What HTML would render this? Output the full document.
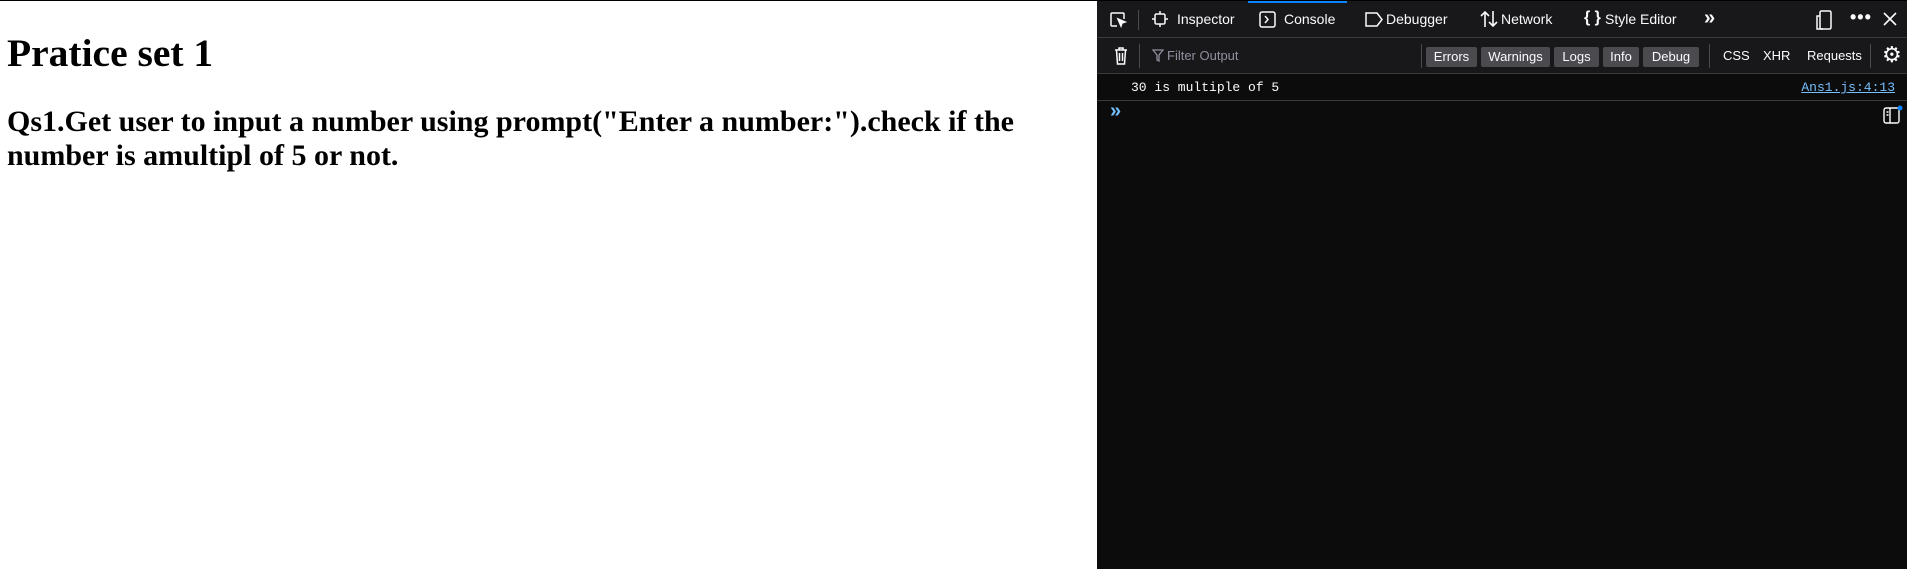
<!DOCTYPE html>
<html><head><style>
*{margin:0;padding:0;box-sizing:border-box}
body{width:1907px;height:568px;overflow:hidden;background:#fff;position:relative;font-family:"Liberation Serif",serif;border-top:1px solid #000}
.page{position:absolute;left:0;top:0;width:1097px;height:568px}
h1{position:absolute;left:7px;top:29px;font-size:39.5px;font-weight:bold;white-space:nowrap}
h2{position:absolute;left:7px;top:104px;font-size:30px;line-height:34px;font-weight:bold;width:1050px}
.dt{position:absolute;left:1097px;top:0;width:810px;height:568px;background:#0c0c0d;font-family:"Liberation Sans",sans-serif;color:#fbfbfe;font-size:14px}
.bar1{position:absolute;left:0;top:0;width:810px;height:37px;background:#18181a;border-bottom:1px solid #3a3a3e}
.bar2{position:absolute;left:0;top:37px;width:810px;height:36px;background:#18181a;border-bottom:1px solid #3a3a3e}
.a{position:absolute;white-space:nowrap}
.t{top:10px;color:#fbfbfe}
.btn{position:absolute;top:9px;height:20px;background:#4a4a4f;color:#fbfbfe;font-size:13px;line-height:20px;text-align:center;border-radius:2px}
.sep{position:absolute;width:1px;background:#4a4a4f}
.msg{position:absolute;left:0;top:73px;width:810px;height:27px;border-bottom:1px solid #3a3a3e;font-family:"Liberation Mono",monospace;font-size:13px}
svg{position:absolute}
</style></head><body>
<div class="page">
<h1>Pratice set 1</h1>
<h2>Qs1.Get user to input a number using prompt("Enter a number:").check if the number is amultipl of 5 or not.</h2>
</div>
<div class="dt">
<div class="bar1">
<div style="position:absolute;left:151px;top:0;width:99px;height:2px;background:#0a84ff"></div>
<svg style="left:12px;top:10px" width="18" height="18" viewBox="0 0 18 18" fill="none" stroke="#fbfbfe" stroke-width="1.5"><path d="M8 15H3a1 1 0 0 1-1-1V3a1 1 0 0 1 1-1h11a1 1 0 0 1 1 1v5"/><path d="M9 8l7 3-3 1-1 3z" fill="#fbfbfe"/></svg>
<div class="sep" style="left:41px;top:9px;height:20px"></div>
<svg style="left:55px;top:10px" width="16" height="16" viewBox="0 0 16 16" fill="none" stroke="#fbfbfe" stroke-width="1.5"><rect x="3" y="3" width="10" height="10" rx="1.5"/><path d="M8 0v3M8 13v3M0 8h3M13 8h3"/></svg>
<span class="a t" style="left:80px">Inspector</span>
<svg style="left:162px;top:10px" width="17" height="17" viewBox="0 0 17 17" fill="none" stroke="#fbfbfe" stroke-width="1.5"><rect x="1" y="1" width="15" height="15" rx="2"/><path d="M6 5l3 3.5L6 12"/></svg>
<span class="a t" style="left:187px">Console</span>
<svg style="left:268px;top:11px" width="18" height="15" viewBox="0 0 18 15" fill="none" stroke="#fbfbfe" stroke-width="1.5"><path d="M1 1h11l5 6.5-5 6.5H1z"/></svg>
<span class="a t" style="left:289px">Debugger</span>
<svg style="left:383px;top:9px" width="18" height="18" viewBox="0 0 18 18" fill="none" stroke="#fbfbfe" stroke-width="1.6"><path d="M5 17V2M1 6l4-4 4 4M13 1v15M9 12l4 4 4-4"/></svg>
<span class="a t" style="left:404px">Network</span>
<span class="a t" style="left:487px;font-weight:bold;top:8px;font-size:16px">{ }</span>
<span class="a t" style="left:508px">Style Editor</span>
<span class="a t" style="left:607px;top:6px;font-size:20px;font-weight:bold">»</span>
<svg style="left:719px;top:9px" width="16" height="20" viewBox="0 0 16 20" fill="none" stroke="#fbfbfe" stroke-width="1.5"><rect x="4" y="1" width="11" height="18" rx="1.5"/><path d="M4 6H1v13h6"/></svg>
<span class="a t" style="left:753px;top:6px;font-size:18px;font-weight:bold;letter-spacing:1px">•••</span>
<svg style="left:786px;top:11px" width="14" height="14" viewBox="0 0 14 14" stroke="#fbfbfe" stroke-width="1.6"><path d="M1 1l12 12M13 1L1 13"/></svg>
</div>
<div class="bar2">
<svg style="left:17px;top:9px" width="14" height="18" viewBox="0 0 14 18" fill="none" stroke="#fbfbfe" stroke-width="1.5"><path d="M1 3h12M5 3V1h4v2M2.5 3l1 14h7l1-14M5.5 6v8M8.5 6v8"/></svg>
<div class="sep" style="left:42px;top:6px;height:24px"></div>
<svg style="left:55px;top:11px" width="12" height="13" viewBox="0 0 12 13" fill="none" stroke="#8f8f9d" stroke-width="1.3"><path d="M1 1h10L7 6v6L5 11V6z"/></svg>
<span class="a" style="left:70px;top:10px;color:#8f8f9d;font-size:13px">Filter Output</span>
<div class="sep" style="left:324px;top:6px;height:24px"></div>
<div class="btn" style="left:329px;width:51px">Errors</div>
<div class="btn" style="left:384px;width:69px">Warnings</div>
<div class="btn" style="left:457px;width:45px">Logs</div>
<div class="btn" style="left:506px;width:36px">Info</div>
<div class="btn" style="left:546px;width:56px">Debug</div>
<div class="sep" style="left:612px;top:6px;height:24px"></div>
<span class="a" style="left:626px;top:10px;font-size:13px">CSS</span>
<span class="a" style="left:666px;top:10px;font-size:13px">XHR</span>
<span class="a" style="left:710px;top:10px;font-size:13px">Requests</span>
<div class="sep" style="left:773px;top:6px;height:24px"></div>
<span class="a" style="left:785px;top:4px;font-size:22px">⚙</span>
</div>
<div class="msg">
<span class="a" style="left:34px;top:6px">30 is multiple of 5</span>
<span class="a" style="right:12px;top:6px;color:#75bfff;text-decoration:underline">Ans1.js:4:13</span>
</div>
<span class="a" style="left:13px;top:99px;color:#75bfff;font-size:20px;font-weight:bold">»</span>
<svg style="left:786px;top:104px" width="20" height="20" viewBox="0 0 20 20" fill="none" stroke="#fbfbfe" stroke-width="1.4"><rect x="1" y="3" width="15" height="15" rx="2"/><path d="M7 3v15M3.5 7h2M3.5 10h2"/><circle cx="17" cy="3" r="2.5" fill="#0a84ff" stroke="none"/></svg>
</div>
</body></html>
